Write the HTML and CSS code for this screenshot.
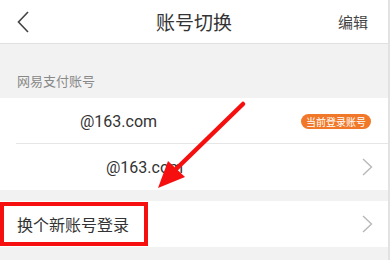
FILE: index.html
```html
<!DOCTYPE html>
<html lang="zh">
<head>
<meta charset="utf-8">
<link rel="stylesheet" href="styles.css">
</head>
<body>
<div class="page">
  <header class="topbar">
    <svg class="back" width="12" height="22" viewBox="0 0 12 22"><polyline points="11,1 1.5,11 11,21" fill="none" stroke="#444" stroke-width="1.6" stroke-linejoin="miter"/></svg>
    <div class="title">账号切换</div>
    <div class="edit">编辑</div>
  </header>
  <div class="section-label">网易支付账号</div>
  <div class="group">
    <div class="row row-first">
      <span class="email email-1">@163.com</span>
      <span class="badge">当前登录账号</span>
    </div>
    <div class="row row-second">
      <span class="email email-2">@163.com</span>
      <svg class="chev" width="11" height="18" viewBox="0 0 11 18"><polyline points="1,1 9.5,9 1,17" fill="none" stroke="#b8b8b8" stroke-width="1.4"/></svg>
    </div>
  </div>
  <div class="group group-new">
    <div class="row row-new">
      <span class="new-text">换个新账号登录</span>
      <svg class="chev" width="11" height="18" viewBox="0 0 11 18"><polyline points="1,1 9.5,9 1,17" fill="none" stroke="#b8b8b8" stroke-width="1.4"/></svg>
      <div class="highlight"></div>
    </div>
  </div>
  <svg class="arrow" width="390" height="260" viewBox="0 0 390 260">
    <line x1="243" y1="104" x2="172" y2="173" stroke="#f5100f" stroke-width="4.5" stroke-linecap="round"/>
    <polygon points="158,188 168,161 185,177" fill="#f5100f"/>
  </svg>
</div>
</body>
</html>
```
FILE: styles.css
```css
* { box-sizing: border-box; }
html, body { margin: 0; padding: 0; }
body {
  width: 390px;
  height: 260px;
  overflow: hidden;
  background: #f2f2f2;
  font-family: "Noto Sans CJK SC", "Noto Sans", sans-serif;
  color: #333;
}
.page {
  position: relative;
  width: 390px;
  height: 260px;
  border-right: 2px solid #e2e2e2;
}
.topbar {
  height: 44px;
  background: #fff;
  border-bottom: 1px solid #e0e0e0;
  display: flex;
  align-items: center;
  justify-content: space-between;
  padding: 0 20px 0 17px;
  position: relative;
}
.back { display: block; margin-top: 0; }
.title {
  position: absolute;
  left: 0;
  right: 0;
  text-align: center;
  font-size: 19px;
  line-height: 44px;
  color: #333;
  pointer-events: none;
}
.edit {
  font-size: 15px;
  color: #444;
  line-height: 44px;
}
.section-label {
  height: 54px;
  padding: 0 17px 8px;
  display: flex;
  align-items: flex-end;
  font-size: 13px;
  line-height: 18px;
  color: #888;
}
.group { background: #fff; }
.row {
  display: flex;
  align-items: center;
  position: relative;
}
.row-first {
  height: 46px;
  padding-left: 80px;
  padding-right: 16px;
}
.row-first::after {
  content: "";
  position: absolute;
  left: 16px;
  right: 0;
  bottom: 0;
  height: 1px;
  background: #e6e6e6;
}
.row-second {
  height: 46px;
  padding-left: 106px;
  padding-right: 15px;
}
.email {
  font-family: Roboto, "Noto Sans", sans-serif;
  font-size: 16px;
  color: #333;
  flex: 1;
}
.badge {
  background: #f07828;
  color: #fff;
  font-size: 10px;
  line-height: 15px;
  height: 15px;
  padding: 0 5px;
  border-radius: 8px;
  margin-right: 1px;
}
.chev { display: block; }
.group-new { margin-top: 11px; }
.row-new {
  height: 46px;
  padding-left: 17px;
  padding-right: 15px;
}
.new-text {
  flex: 1;
  font-size: 16px;
  color: #333;
}
.highlight {
  position: absolute;
  left: 0;
  top: 1px;
  width: 148px;
  height: 44px;
  border: 4px solid #f5100f;
}
.arrow {
  position: absolute;
  left: 0;
  top: 0;
  pointer-events: none;
}
```
